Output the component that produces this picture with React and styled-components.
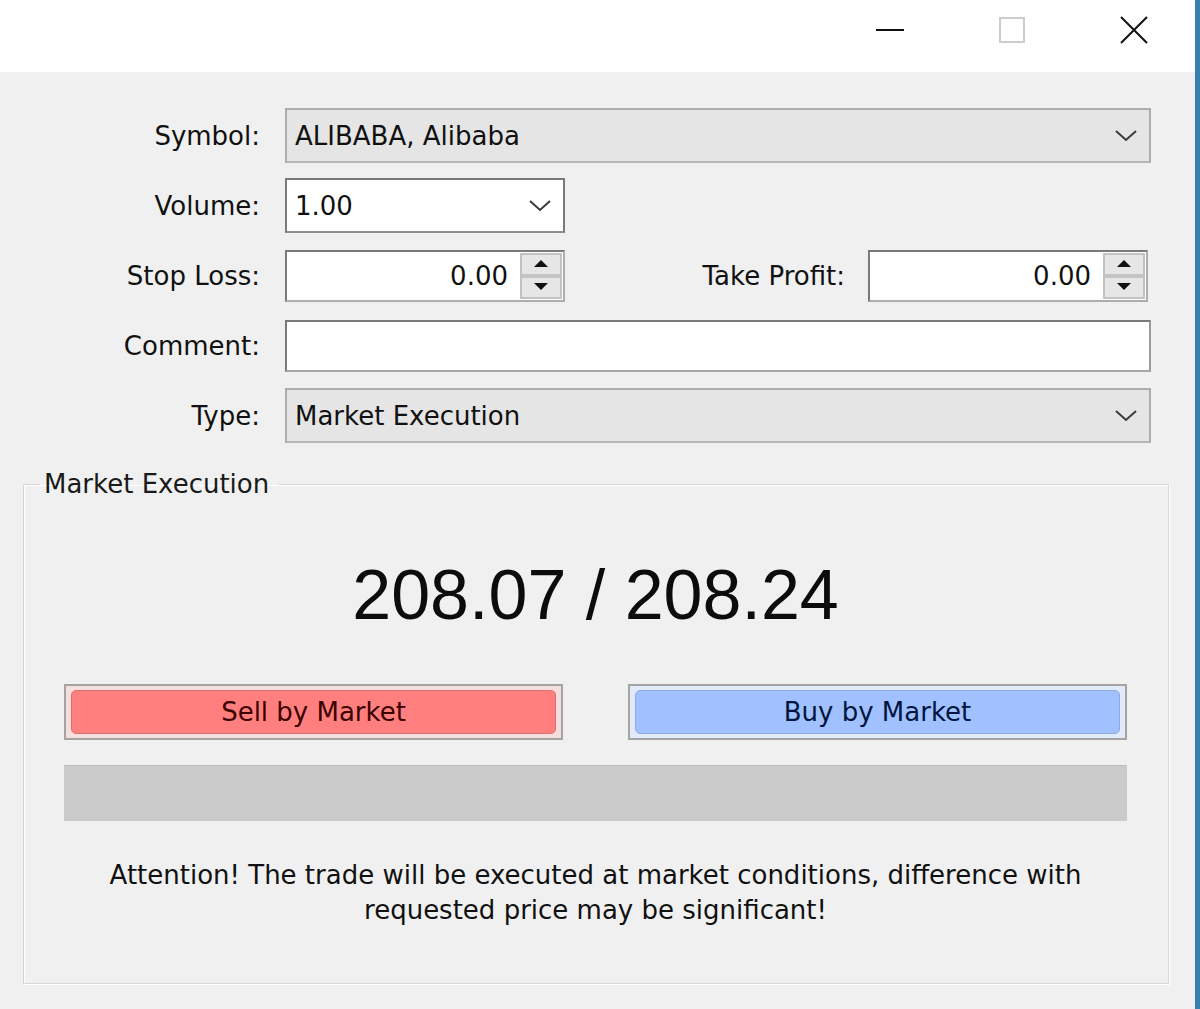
import React from 'react';
import styled, { createGlobalStyle } from 'styled-components';

const GlobalStyle = createGlobalStyle`
  html, body {
    margin: 0;
    padding: 0;
    background: #f0f0f0;
  }
  body {
    font-family: "DejaVu Sans", Verdana, sans-serif;
    color: #111;
  }
`;

const Window = styled.div`
  width: 1200px;
  height: 1009px;
  box-sizing: border-box;
  border-right: 5px solid #3a7eb1;
  background: #f0f0f0;
  display: flex;
  flex-direction: column;
  overflow: hidden;
`;

const TitleBar = styled.div`
  height: 72px;
  box-sizing: border-box;
  padding-bottom: 12px;
  background: #ffffff;
  display: flex;
  justify-content: flex-end;
  align-items: center;

  .ctl {
    width: 122px;
    height: 60px;
    display: flex;
    align-items: center;
    justify-content: center;
  }
`;

const Body = styled.div`
  flex: 1;
  padding: 36px 26px 0 23px;
`;

const Form = styled.div`
  display: flex;
  flex-direction: column;
  gap: 15px;
  margin-left: -23px;
`;

const Row = styled.div`
  display: flex;
  align-items: center;
  height: 55px;
`;

const Label = styled.div`
  width: ${p => p.$w || 260}px;
  text-align: right;
  font-size: 26px;
  margin-right: ${p => p.$gap || 25}px;
  flex-shrink: 0;
`;

const Select = styled.div`
  box-sizing: border-box;
  width: ${p => p.$w}px;
  height: 55px;
  display: flex;
  align-items: center;
  justify-content: space-between;
  padding: 0 12px 0 8px;
  font-size: 26px;
  background: ${p => (p.$light ? '#ffffff' : '#e5e5e5')};
  border: 2px solid ${p => (p.$light ? '#7a7a7a' : '#adadad')};
  border-bottom-color: ${p => (p.$light ? '#8e8e8e' : '#b7b7b7')};
`;

const TextBox = styled.div`
  box-sizing: border-box;
  width: ${p => p.$w}px;
  height: 52px;
  background: #ffffff;
  border: 2px solid #7a7a7a;
  border-right-color: #9a9a9a;
  border-bottom-color: #a8a8a8;
`;

const SpinBox = styled.div`
  box-sizing: border-box;
  width: 280px;
  height: 52px;
  display: flex;
  background: #ffffff;
  border: 2px solid #7a7a7a;
  border-right-color: #adadad;
  border-bottom-color: #adadad;
`;

const SpinValue = styled.div`
  flex: 1;
  display: flex;
  align-items: center;
  justify-content: flex-end;
  padding-right: 12px;
  font-size: 26px;
`;

const SpinButtons = styled.div`
  width: 42px;
  display: flex;
  flex-direction: column;
  background: #e6e6e6;
  border: 2px solid #c2c2c2;
  box-sizing: border-box;
  margin: 1px 1px 1px 0;
`;

const SpinButton = styled.div`
  flex: 1;
  display: flex;
  align-items: center;
  justify-content: center;
  border-top: ${p => (p.$down ? '4px solid #c4c4c4' : 'none')};
`;

const Group = styled.fieldset`
  margin: 26px 0 0 0;
  padding: 0 41px 55px 40px;
  border: 1px solid #d6d6d6;
  box-shadow: inset 1px 1px 0 #ffffff, 1px 1px 0 #ffffff;
  display: flex;
  flex-direction: column;

  legend {
    font-size: 26px;
    line-height: 30px;
    padding: 0 10px 0 4px;
    margin-left: -24px;
    color: #1a1a1a;
  }
`;

const Price = styled.div`
  text-align: center;
  font-family: "Liberation Sans", Arial, sans-serif;
  font-size: 70px;
  line-height: 80px;
  margin-top: 56px;
  color: #0c0c0c;
`;

const Buttons = styled.div`
  display: flex;
  justify-content: space-between;
  margin-top: 49px;
`;

const TradeButton = styled.div`
  box-sizing: border-box;
  width: 499px;
  height: 56px;
  padding: 4px 5px;
  border: 2px solid #a4a4a4;
  background: ${p => (p.$kind === 'sell' ? '#f7dede' : '#e2eaf8')};

  span {
    box-sizing: border-box;
    display: flex;
    align-items: center;
    justify-content: center;
    height: 100%;
    border-radius: 5px;
    font-size: 26px;
    background: ${p => (p.$kind === 'sell' ? '#ff7f7f' : '#a0c0ff')};
    border: 1px solid ${p => (p.$kind === 'sell' ? '#e07070' : '#8eacdf')};
    color: ${p => (p.$kind === 'sell' ? '#3c0000' : '#001540')};
  }
`;

const StatusBar = styled.div`
  height: 55px;
  margin-top: 25px;
  background: #cbcbcb;
  border-top: 1px solid #bdbdbd;
`;

const Notice = styled.div`
  margin-top: 37px;
  text-align: center;
  font-size: 26px;
  line-height: 35px;
  color: #111;
`;

const Chevron = () => (
  <svg width="22" height="12" viewBox="0 0 22 12">
    <path d="M1 1 L11 10 L21 1" fill="none" stroke="#3a3a3a" strokeWidth="2" />
  </svg>
);

const Arrow = ({ down }) => (
  <svg width="14" height="8" viewBox="0 0 14 8">
    {down ? <path d="M0 0 H14 L7 7 Z" fill="#111" /> : <path d="M7 0 L14 7 H0 Z" fill="#111" />}
  </svg>
);

const Spinner = ({ value }) => (
  <SpinBox>
    <SpinValue>{value}</SpinValue>
    <SpinButtons>
      <SpinButton>
        <Arrow />
      </SpinButton>
      <SpinButton $down>
        <Arrow down />
      </SpinButton>
    </SpinButtons>
  </SpinBox>
);

export default function App() {
  return (
    <>
      <GlobalStyle />
      <Window>
        <TitleBar>
          <div className="ctl">
            <svg width="28" height="4" viewBox="0 0 28 4">
              <rect x="0" y="1" width="28" height="2" fill="#111" />
            </svg>
          </div>
          <div className="ctl">
            <svg width="26" height="26" viewBox="0 0 26 26">
              <rect x="1" y="1" width="24" height="24" fill="none" stroke="#cccccc" strokeWidth="2" />
            </svg>
          </div>
          <div className="ctl">
            <svg width="28" height="28" viewBox="0 0 28 28">
              <path d="M1 1 L27 27 M27 1 L1 27" stroke="#111" strokeWidth="2" />
            </svg>
          </div>
        </TitleBar>
        <Body>
          <Form>
            <Row>
              <Label>Symbol:</Label>
              <Select $w={866}>
                ALIBABA, Alibaba
                <Chevron />
              </Select>
            </Row>
            <Row>
              <Label>Volume:</Label>
              <Select $w={280} $light>
                1.00
                <Chevron />
              </Select>
            </Row>
            <Row>
              <Label>Stop Loss:</Label>
              <Spinner value="0.00" />
              <Label $w={280} $gap={23}>Take Profit:</Label>
              <Spinner value="0.00" />
            </Row>
            <Row>
              <Label>Comment:</Label>
              <TextBox $w={866} />
            </Row>
            <Row>
              <Label>Type:</Label>
              <Select $w={866}>
                Market Execution
                <Chevron />
              </Select>
            </Row>
          </Form>
          <Group>
            <legend>Market Execution</legend>
            <Price>208.07 / 208.24</Price>
            <Buttons>
              <TradeButton $kind="sell">
                <span>Sell by Market</span>
              </TradeButton>
              <TradeButton $kind="buy">
                <span>Buy by Market</span>
              </TradeButton>
            </Buttons>
            <StatusBar />
            <Notice>
              Attention! The trade will be executed at market conditions, difference with
              <br />
              requested price may be significant!
            </Notice>
          </Group>
        </Body>
      </Window>
    </>
  );
}
